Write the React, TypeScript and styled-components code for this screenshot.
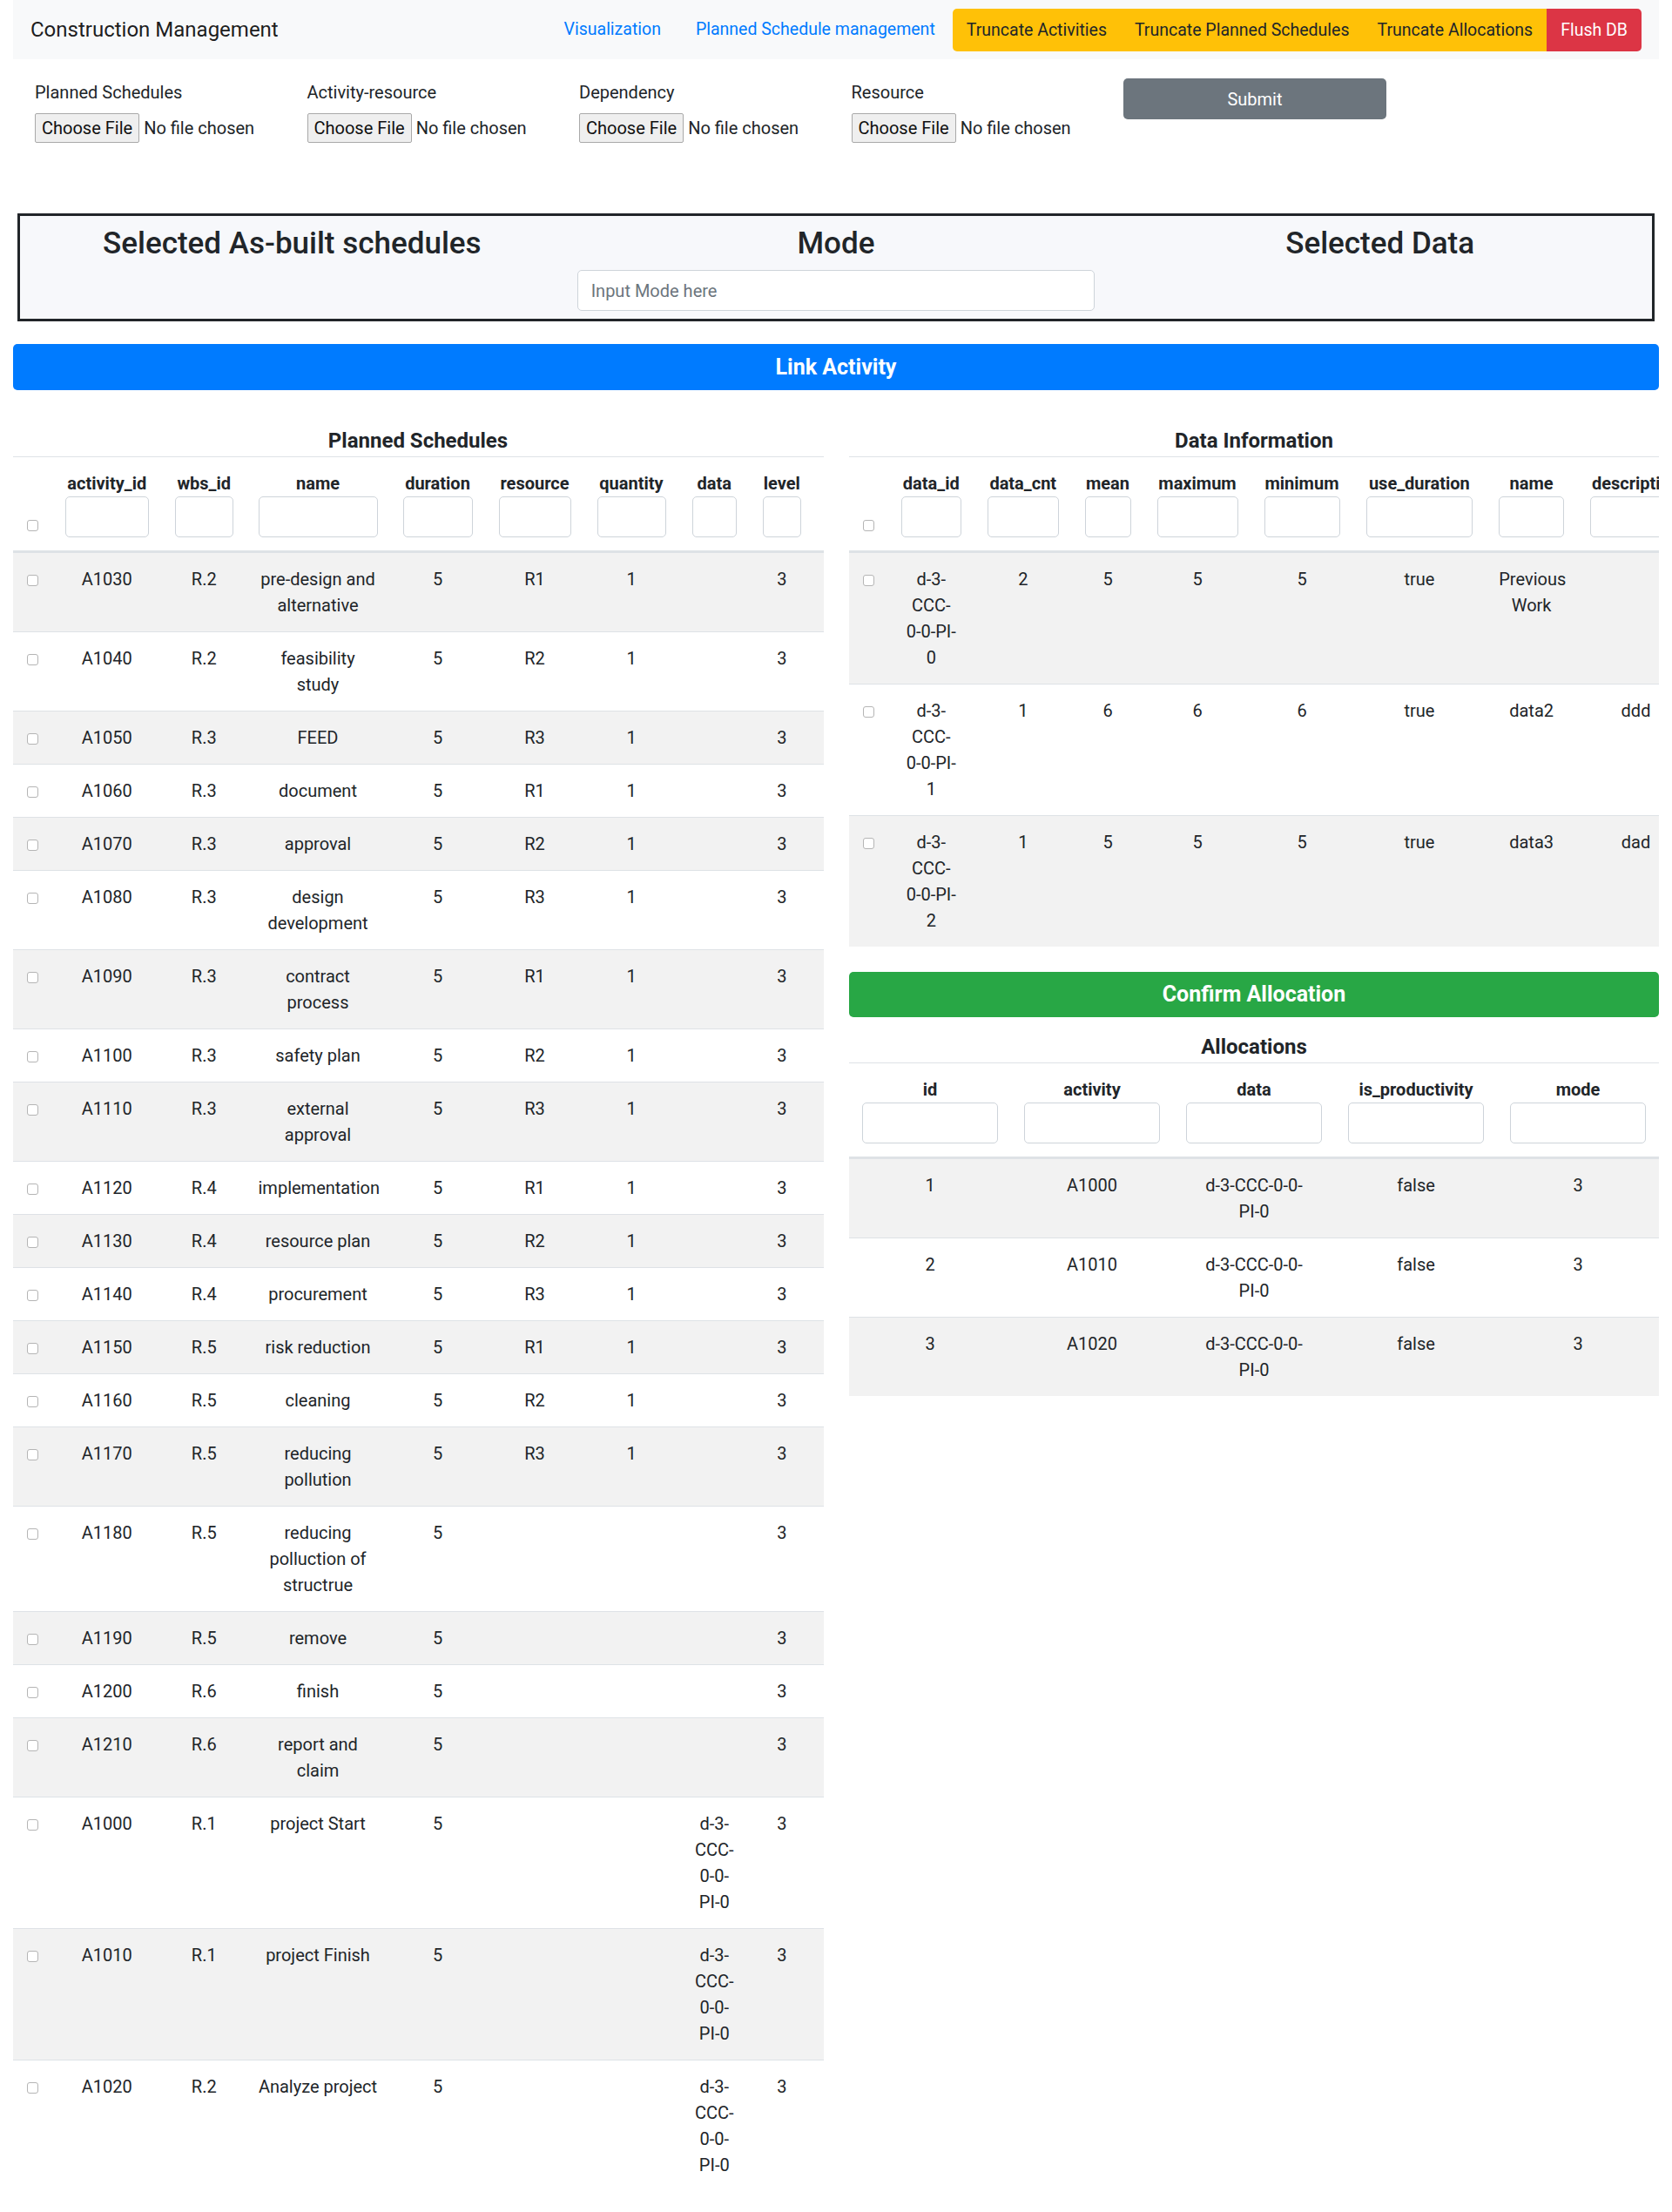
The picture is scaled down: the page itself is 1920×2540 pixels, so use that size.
import React from 'react';
import styled, { createGlobalStyle } from 'styled-components';

const GlobalStyle = createGlobalStyle`
  *, *::before, *::after { box-sizing: border-box; }
  body {
    margin: 0;
    font-family: Roboto, "Liberation Sans", "Noto Sans", sans-serif;
    font-size: 20px;
    line-height: 1.5;
    color: #212529;
    background: #fff;
  }
`;

const Page = styled.div`
  padding: 0 15px 30px;
`;

const Navbar = styled.nav`
  display: flex;
  align-items: center;
  height: 68px;
  padding: 0 20px;
  background: #f8f9fa;
`;

const Brand = styled.span`
  font-size: 24px;
  color: rgba(0, 0, 0, 0.9);
  margin-right: auto;
`;

const NavLink = styled.a`
  color: #007bff;
  padding: 0 20px;
  text-decoration: none;
  font-size: 19.5px;
`;

const ButtonGroup = styled.div`
  display: flex;
  border-radius: 5px;
  overflow: hidden;
`;

const NavButton = styled.button<{ $variant: 'warning' | 'danger' }>`
  height: 49px;
  padding: 0 16px;
  border: none;
  font-family: inherit;
  font-size: 19.5px;
  background: ${(p) => (p.$variant === 'danger' ? '#dc3545' : '#ffc107')};
  color: ${(p) => (p.$variant === 'danger' ? '#fff' : '#212529')};
`;

const UploadForm = styled.form`
  display: grid;
  grid-template-columns: repeat(4, 312.5px) 302px;
  align-items: start;
  padding: 22px 0 0 25px;
`;

const Field = styled.div`
  padding-top: 1px;
`;

const FieldLabel = styled.label`
  display: block;
  margin-bottom: 9px;
  line-height: 30px;
`;

const FileInput = styled.input.attrs({ type: 'file' })`
  display: block;
  width: 100%;
  font-family: Roboto, "Liberation Sans", sans-serif;
  font-size: 20px;
  line-height: 24px;
  color: #212529;

  &::file-selector-button {
    font: inherit;
    line-height: 24px;
    padding: 4px 7px;
    margin-right: 5px;
    background: #efefef;
    border: 1px solid #a9a9a9;
    border-radius: 2px;
    color: #111;
  }
`;

const SubmitButton = styled.button`
  width: 100%;
  height: 47px;
  border: none;
  border-radius: 5px;
  background: #6c757d;
  color: #fff;
  font-family: inherit;
  font-size: 20px;
`;

const SelectionBox = styled.section`
  display: grid;
  grid-template-columns: repeat(3, 1fr);
  margin: 81px 5px 0;
  padding: 11px 0 9px;
  border: 3px solid #212529;
  background: #f7f8fb;
`;

const SelectionColumn = styled.div`
  padding: 0 15px;
  text-align: center;
`;

const SelectionTitle = styled.h3`
  margin: 0;
  font-size: 35px;
  font-weight: 500;
  line-height: 1.2;
`;

const ModeInput = styled.input`
  display: block;
  width: 100%;
  height: 47px;
  margin-top: 9px;
  padding: 0 15px;
  border: 1px solid #ced4da;
  border-radius: 5px;
  background: #fff;
  font-family: inherit;
  font-size: 20px;
  color: #495057;

  &::placeholder {
    color: #6c757d;
  }
`;

const WideButton = styled.button<{ $color: string; $top: number }>`
  display: block;
  width: 100%;
  height: 52.5px;
  margin-top: ${(p) => p.$top}px;
  border: none;
  border-radius: 5px;
  background: ${(p) => p.$color};
  color: #fff;
  font-family: inherit;
  font-size: 25px;
  font-weight: 700;
`;

const Columns = styled.div`
  display: grid;
  grid-template-columns: 1fr 1fr;
  column-gap: 30px;
  margin-top: 44px;
  align-items: start;
`;

const Column = styled.div`
  min-width: 0;
`;

const SectionTitle = styled.h5<{ $top?: number }>`
  margin: ${(p) => p.$top ?? 0}px 0 3px;
  font-size: 24px;
  font-weight: 700;
  line-height: 29px;
  text-align: center;
`;

const TableClip = styled.div`
  overflow: hidden;
`;

const Table = styled.table<{ $width?: number }>`
  width: ${(p) => (p.$width ? `${p.$width}px` : '100%')};
  table-layout: fixed;
  border-collapse: collapse;
  text-align: center;
`;

const HeadCell = styled.th<{ $pad?: string }>`
  padding: ${(p) => p.$pad ?? '15px'};
  border-top: 1px solid #dee2e6;
  border-bottom: 3px solid #dee2e6;
  vertical-align: bottom;
  font-weight: 700;
  line-height: 30px;
  white-space: nowrap;
`;

const FilterInput = styled.input`
  display: block;
  width: 100%;
  height: 47px;
  padding: 0 15px;
  border: 1px solid #ced4da;
  border-radius: 5px;
  background: #fff;
`;

const Row = styled.tr`
  &:nth-of-type(odd) {
    background: rgba(0, 0, 0, 0.05);
  }
`;

const Cell = styled.td<{ $pad?: string }>`
  padding: ${(p) => p.$pad ?? '15px'};
  border-top: 1px solid #dee2e6;
  vertical-align: top;
  line-height: 30px;
`;

const RowCheck = styled.input.attrs({ type: 'checkbox' })`
  appearance: none;
  width: 13px;
  height: 13px;
  margin: 0;
  border: 1px solid #b5b5b5;
  border-radius: 3px;
  background: #fff;
  vertical-align: middle;
`;

type Col = {
  key: string;
  label: string;
  width: number;
  pad?: string;
  bodyPad?: string;
};

const plannedCols: Col[] = [
  { key: 'activity_id', label: 'activity_id', width: 126.5 },
  { key: 'wbs_id', label: 'wbs_id', width: 96.5 },
  { key: 'name', label: 'name', width: 165, pad: '15px 14px' },
  { key: 'duration', label: 'duration', width: 110 },
  { key: 'resource', label: 'resource', width: 113 },
  { key: 'quantity', label: 'quantity', width: 109 },
  { key: 'data', label: 'data', width: 81.5 },
  { key: 'level', label: 'level', width: 84.5, pad: '15px 26px 15px 15px' },
];

const D0 = 'd-3-CCC-0-0-PI-0';

const plannedRows: Record<string, string>[] = [
  ['A1030', 'R.2', 'pre-design and alternative', '5', 'R1', '1', '', '3'],
  ['A1040', 'R.2', 'feasibility study', '5', 'R2', '1', '', '3'],
  ['A1050', 'R.3', 'FEED', '5', 'R3', '1', '', '3'],
  ['A1060', 'R.3', 'document', '5', 'R1', '1', '', '3'],
  ['A1070', 'R.3', 'approval', '5', 'R2', '1', '', '3'],
  ['A1080', 'R.3', 'design development', '5', 'R3', '1', '', '3'],
  ['A1090', 'R.3', 'contract process', '5', 'R1', '1', '', '3'],
  ['A1100', 'R.3', 'safety plan', '5', 'R2', '1', '', '3'],
  ['A1110', 'R.3', 'external approval', '5', 'R3', '1', '', '3'],
  ['A1120', 'R.4', 'implementation', '5', 'R1', '1', '', '3'],
  ['A1130', 'R.4', 'resource plan', '5', 'R2', '1', '', '3'],
  ['A1140', 'R.4', 'procurement', '5', 'R3', '1', '', '3'],
  ['A1150', 'R.5', 'risk reduction', '5', 'R1', '1', '', '3'],
  ['A1160', 'R.5', 'cleaning', '5', 'R2', '1', '', '3'],
  ['A1170', 'R.5', 'reducing pollution', '5', 'R3', '1', '', '3'],
  ['A1180', 'R.5', 'reducing polluction of structrue', '5', '', '', '', '3'],
  ['A1190', 'R.5', 'remove', '5', '', '', '', '3'],
  ['A1200', 'R.6', 'finish', '5', '', '', '', '3'],
  ['A1210', 'R.6', 'report and claim', '5', '', '', '', '3'],
  ['A1000', 'R.1', 'project Start', '5', '', '', D0, '3'],
  ['A1010', 'R.1', 'project Finish', '5', '', '', D0, '3'],
  ['A1020', 'R.2', 'Analyze project', '5', '', '', D0, '3'],
].map((r) => Object.fromEntries(plannedCols.map((c, i) => [c.key, r[i]])));

const dataCols: Col[] = [
  { key: 'data_id', label: 'data_id', width: 99.5, bodyPad: '15px 20px' },
  { key: 'data_cnt', label: 'data_cnt', width: 111.5 },
  { key: 'mean', label: 'mean', width: 83 },
  { key: 'maximum', label: 'maximum', width: 123 },
  { key: 'minimum', label: 'minimum', width: 117 },
  { key: 'use_duration', label: 'use_duration', width: 152.75 },
  { key: 'name', label: 'name', width: 104.75 },
  { key: 'description', label: 'description', width: 135 },
];

const dataRows: Record<string, string>[] = [
  ['d-3-CCC-0-0-PI-0', '2', '5', '5', '5', 'true', 'Previous Work', ''],
  ['d-3-CCC-0-0-PI-1', '1', '6', '6', '6', 'true', 'data2', 'ddd'],
  ['d-3-CCC-0-0-PI-2', '1', '5', '5', '5', 'true', 'data3', 'dad'],
].map((r) => Object.fromEntries(dataCols.map((c, i) => [c.key, r[i]])));

const allocCols: Col[] = [
  { key: 'id', label: 'id', width: 186 },
  { key: 'activity', label: 'activity', width: 186 },
  { key: 'data', label: 'data', width: 186, bodyPad: '15px 32px' },
  { key: 'is_productivity', label: 'is_productivity', width: 186 },
  { key: 'mode', label: 'mode', width: 186 },
];

const allocRows: Record<string, string>[] = [
  ['1', 'A1000', D0, 'false', '3'],
  ['2', 'A1010', D0, 'false', '3'],
  ['3', 'A1020', D0, 'false', '3'],
].map((r) => Object.fromEntries(allocCols.map((c, i) => [c.key, r[i]])));

type GridProps = {
  cols: Col[];
  rows: Record<string, string>[];
  selectable?: boolean;
  width?: number;
};

function DataGrid({ cols, rows, selectable, width }: GridProps) {
  return (
    <Table $width={width}>
      <colgroup>
        {selectable && <col style={{ width: 44.5 }} />}
        {cols.map((c) => (
          <col key={c.key} style={{ width: c.width }} />
        ))}
      </colgroup>
      <thead>
        <tr>
          {selectable && (
            <HeadCell>
              <RowCheck />
            </HeadCell>
          )}
          {cols.map((c) => (
            <HeadCell key={c.key} $pad={c.pad}>
              {c.label}
              <FilterInput />
            </HeadCell>
          ))}
        </tr>
      </thead>
      <tbody>
        {rows.map((r, i) => (
          <Row key={i}>
            {selectable && (
              <Cell>
                <RowCheck />
              </Cell>
            )}
            {cols.map((c) => (
              <Cell key={c.key} $pad={c.bodyPad ?? c.pad}>
                {r[c.key]}
              </Cell>
            ))}
          </Row>
        ))}
      </tbody>
    </Table>
  );
}

const uploads = ['Planned Schedules', 'Activity-resource', 'Dependency', 'Resource'];

export default function App() {
  return (
    <Page>
      <GlobalStyle />
      <Navbar>
        <Brand>Construction Management</Brand>
        <NavLink href="#">Visualization</NavLink>
        <NavLink href="#">Planned Schedule management</NavLink>
        <ButtonGroup>
          <NavButton $variant="warning">Truncate Activities</NavButton>
          <NavButton $variant="warning">Truncate Planned Schedules</NavButton>
          <NavButton $variant="warning">Truncate Allocations</NavButton>
          <NavButton $variant="danger">Flush DB</NavButton>
        </ButtonGroup>
      </Navbar>

      <UploadForm onSubmit={(e) => e.preventDefault()}>
        {uploads.map((u) => (
          <Field key={u}>
            <FieldLabel>{u}</FieldLabel>
            <FileInput />
          </Field>
        ))}
        <SubmitButton type="submit">Submit</SubmitButton>
      </UploadForm>

      <SelectionBox>
        <SelectionColumn>
          <SelectionTitle>Selected As-built schedules</SelectionTitle>
        </SelectionColumn>
        <SelectionColumn>
          <SelectionTitle>Mode</SelectionTitle>
          <ModeInput placeholder="Input Mode here" />
        </SelectionColumn>
        <SelectionColumn>
          <SelectionTitle>Selected Data</SelectionTitle>
        </SelectionColumn>
      </SelectionBox>

      <WideButton $color="#007bff" $top={26}>Link Activity</WideButton>

      <Columns>
        <Column>
          <SectionTitle>Planned Schedules</SectionTitle>
          <DataGrid cols={plannedCols} rows={plannedRows} selectable />
        </Column>
        <Column>
          <SectionTitle>Data Information</SectionTitle>
          <TableClip>
            <DataGrid cols={dataCols} rows={dataRows} selectable width={971} />
          </TableClip>
          <WideButton $color="#28a745" $top={29}>Confirm Allocation</WideButton>
          <SectionTitle $top={20}>Allocations</SectionTitle>
          <DataGrid cols={allocCols} rows={allocRows} />
        </Column>
      </Columns>
    </Page>
  );
}
